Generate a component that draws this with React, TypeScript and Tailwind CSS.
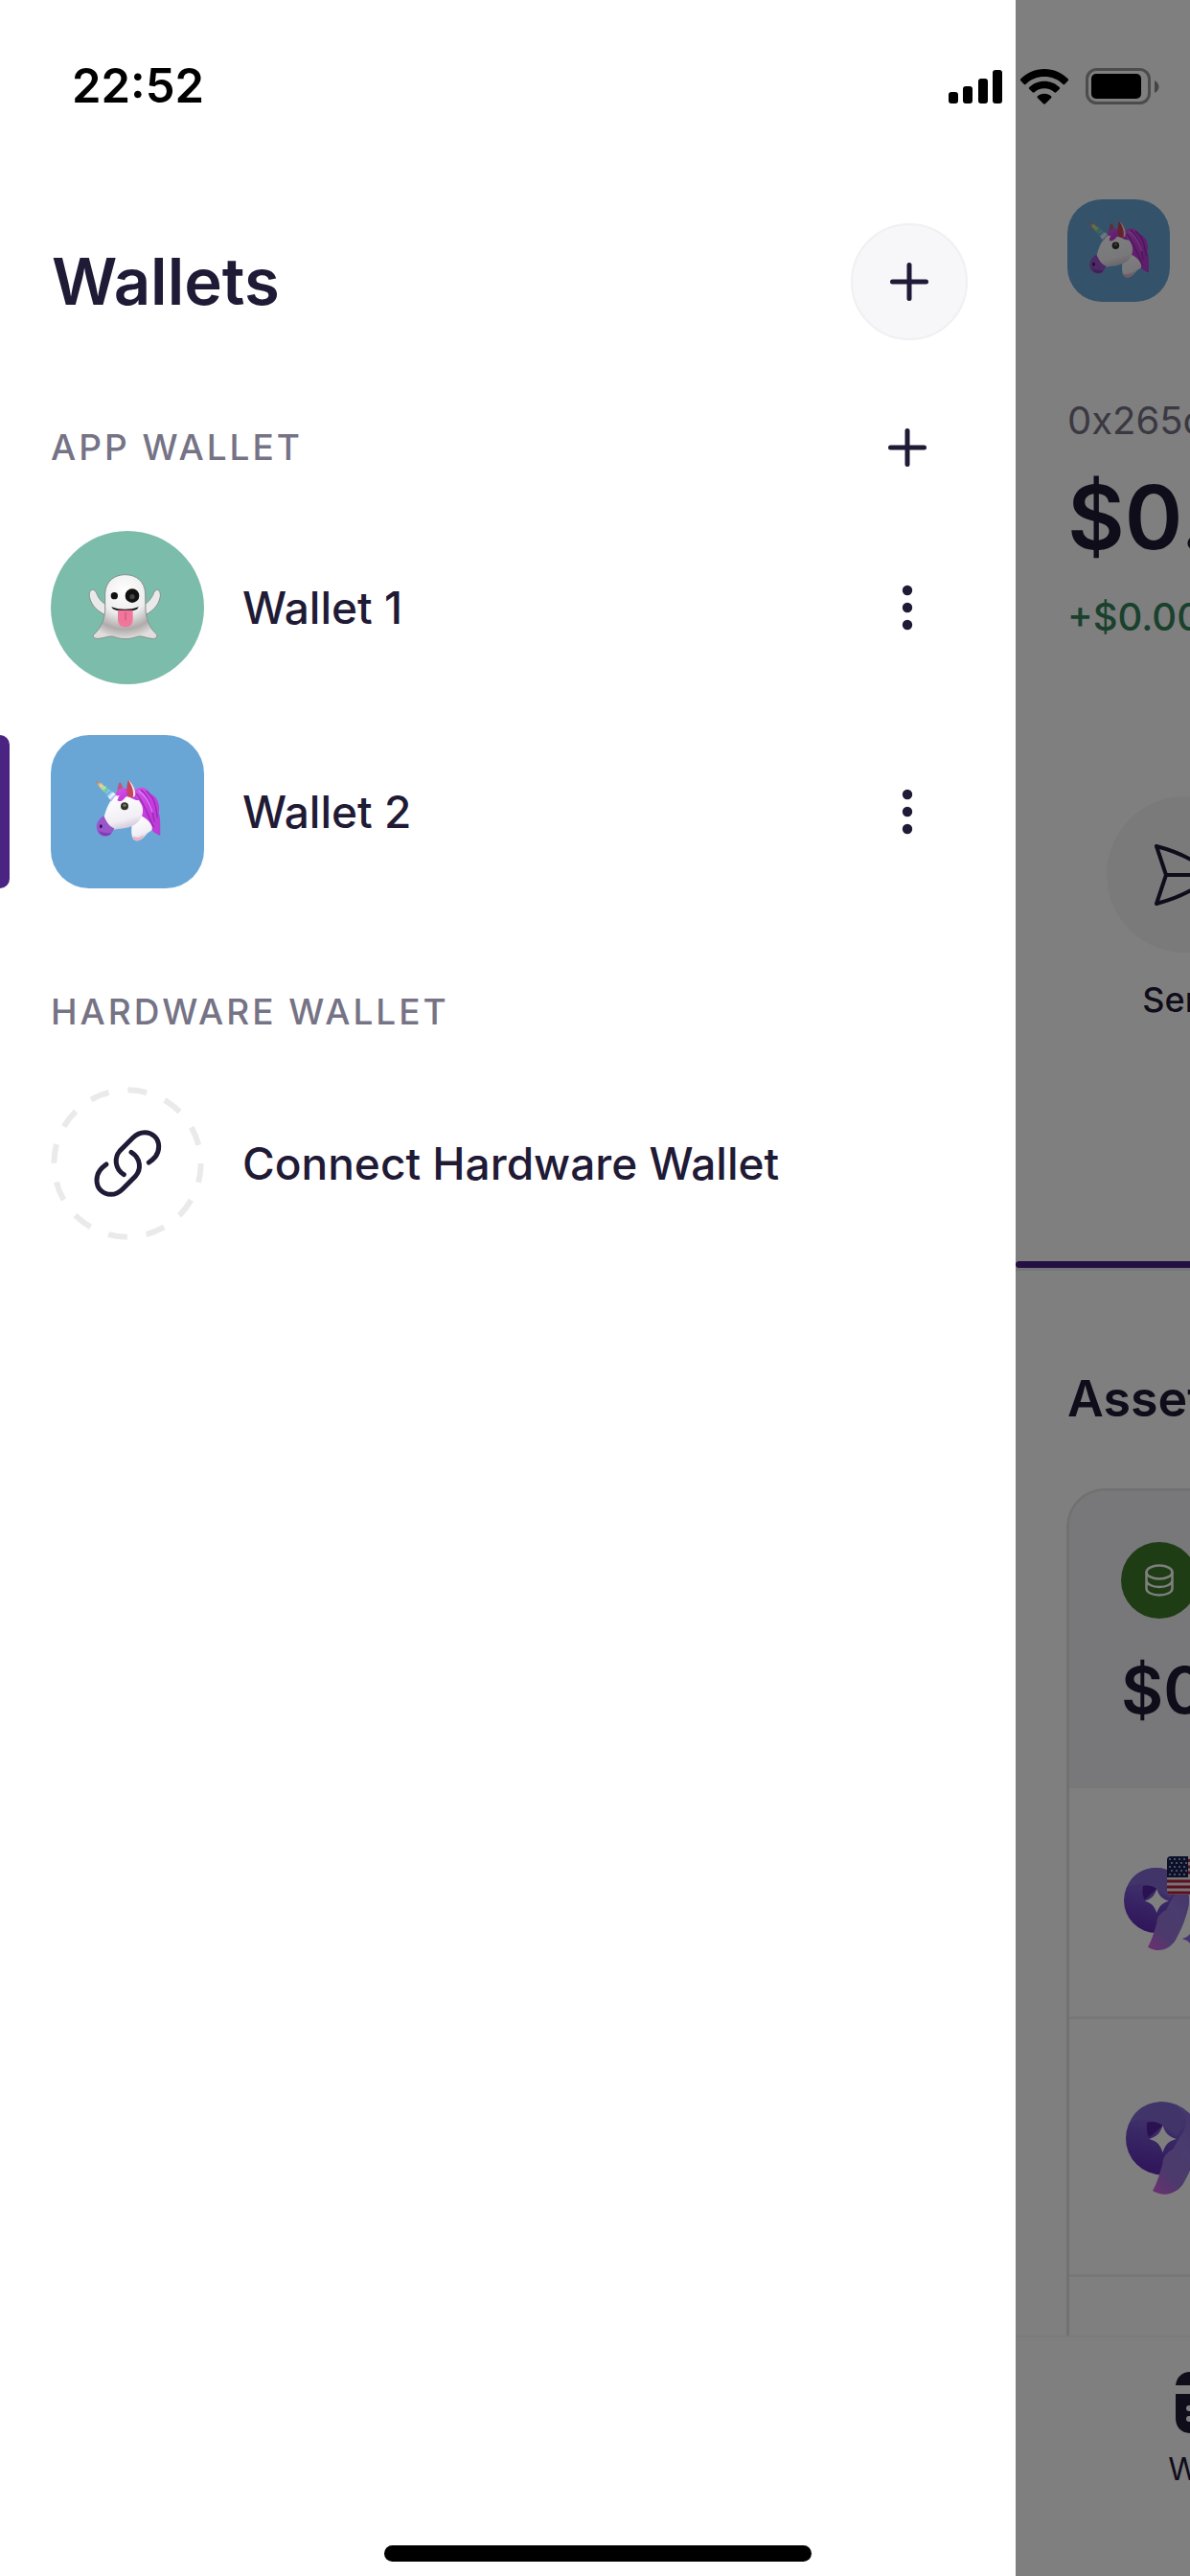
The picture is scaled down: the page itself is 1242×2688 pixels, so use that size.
import type { ReactNode } from "react";
import clsx from "clsx";

type Wallet = {
  name: string;
  avatar: "ghost" | "unicorn";
  selected: boolean;
};

const wallets: Wallet[] = [
  { name: "Wallet 1", avatar: "ghost", selected: false },
  { name: "Wallet 2", avatar: "unicorn", selected: true },
];

function PlusIcon() {
  return (
    <svg viewBox="0 0 40 40" className="size-10" fill="none" stroke="currentColor" strokeWidth="5" strokeLinecap="round" aria-hidden="true">
      <path d="M20 2.5v35M2.5 20h35" />
    </svg>
  );
}

function MoreIcon() {
  return (
    <svg viewBox="0 0 40 50" className="h-[50px] w-10" fill="currentColor" aria-hidden="true">
      <circle cx="20" cy="7" r="5.2" />
      <circle cx="20" cy="25" r="5.2" />
      <circle cx="20" cy="43" r="5.2" />
    </svg>
  );
}

function GhostIcon() {
  return (
    <svg viewBox="0 0 480 480" className="size-full" aria-hidden="true">
      <defs>
        <radialGradient id="ghost-body" cx="0.48" cy="0.25" r="0.75">
          <stop offset="0" stopColor="#ffffff" />
          <stop offset="0.5" stopColor="#ececec" />
          <stop offset="0.8" stopColor="#b0abab" />
          <stop offset="1" stopColor="#e0dddd" />
        </radialGradient>
      </defs>
      <g stroke="#85908d" strokeWidth="3" strokeLinejoin="round">
        <path d="M180 268C150 255 126 235 121 205C119 188 128 181 137 186C146 192 144 216 176 232Z" fill="#e9e9e9" />
        <path d="M286 268C316 255 338 235 343 205C344 188 336 181 328 186C320 192 320 216 290 232Z" fill="#e9e9e9" />
        <path
          d="M170 195C172 157 200 137 233 137C268 137 294 158 296 195L297 250C300 285 315 310 332 324C336 334 326 339 315 337C295 335 285 326 268 332C245 340 222 340 200 332C182 326 170 336 150 337C138 338 130 333 134 325C152 309 167 285 170 250Z"
          fill="url(#ghost-body)"
        />
      </g>
      <circle cx="199" cy="203" r="11" fill="#111" />
      <circle cx="255" cy="203" r="22" fill="#111" />
      <circle cx="255" cy="206" r="8" fill="#444" />
      <path d="M190 238C215 248 250 248 275 238C272 247 262 251 233 251C206 251 194 247 190 238Z" fill="#111" />
      <path d="M210 248H257V275C257 292 248 301 233 301C218 301 210 292 210 275Z" fill="#f0769b" />
      <path d="M234 254V280" stroke="#cc4d78" strokeWidth="3" />
    </svg>
  );
}

function UnicornIcon({ viewBox }: { viewBox: string }) {
  return (
    <svg viewBox={viewBox} className="size-full" aria-hidden="true">
      <defs>
        <linearGradient id="unicorn-horn" x1="0" y1="0" x2="1" y2="1">
          <stop offset="0" stopColor="#b0705c" />
          <stop offset="0.25" stopColor="#e9d68a" />
          <stop offset="0.45" stopColor="#74d49a" />
          <stop offset="0.6" stopColor="#5aa9e8" />
          <stop offset="0.75" stopColor="#f2f6ff" />
          <stop offset="1" stopColor="#3d55c9" />
        </linearGradient>
        <linearGradient id="unicorn-face" x1="0.3" y1="0" x2="0.6" y2="1">
          <stop offset="0" stopColor="#ffffff" />
          <stop offset="0.7" stopColor="#f1eff5" />
          <stop offset="1" stopColor="#cbbfd3" />
        </linearGradient>
        <linearGradient id="unicorn-mane" x1="0" y1="0" x2="1" y2="1">
          <stop offset="0" stopColor="#d05be6" />
          <stop offset="0.5" stopColor="#c83bdf" />
          <stop offset="1" stopColor="#b43fd3" />
        </linearGradient>
      </defs>
      <path d="M208 178C208 163 212 152 216 147C224 154 227 164 227 176Z" fill="#b85a83" />
      <path d="M255 178C275 157 302 162 311 184C334 190 344 222 338 243C345 262 342 292 343 312C337 318 334 308 325 306C306 290 282 262 262 232Z" fill="url(#unicorn-mane)" />
      <path d="M283 172C308 193 318 230 324 270M268 184C292 210 302 248 322 288M300 176C326 196 328 222 334 258" fill="none" stroke="#932bb4" strokeWidth="4" strokeLinecap="round" />
      <path d="M276 176C300 190 310 214 318 240" fill="none" stroke="#e779f3" strokeWidth="4" strokeLinecap="round" />
      <path d="M255 252C279 247 299 258 312 277C321 291 318 300 310 302C298 308 292 326 274 331C256 333 251 314 253 290Z" fill="url(#unicorn-face)" />
      <path d="M258 316C270 326 284 318 291 312C286 326 275 332 266 330C260 328 258 322 258 316Z" fill="#e8b4bf" />
      <path d="M206 188C236 176 274 190 286 222C294 248 280 274 255 284C234 295 205 292 184 299C162 300 158 274 168 252C175 228 184 202 206 188Z" fill="url(#unicorn-face)" />
      <path d="M166 253C150 263 141 277 144 294C148 315 168 322 184 314C193 307 196 298 199 292C184 288 174 271 166 253Z" fill="#9a55cb" />
      <path d="M150 300C158 318 178 320 190 307C178 307 166 308 150 300Z" fill="#7b3eb0" />
      <ellipse cx="157" cy="286" rx="4" ry="6" fill="#33104f" />
      <path d="M140 147C145 145 151 147 156 151L205 186L190 207Z" fill="url(#unicorn-horn)" />
      <path d="M152 158L160 151M163 170L173 161M173 182L186 172M182 195L198 182" stroke="#ffffff" strokeOpacity="0.5" strokeWidth="3" />
      <path d="M205 180C218 160 240 163 248 178C262 182 268 198 278 204C256 206 248 188 234 194C226 206 214 212 208 203C214 200 208 193 218 188C204 194 200 186 205 180Z" fill="url(#unicorn-mane)" />
      <path d="M243 140C258 154 267 172 264 190C258 198 246 198 240 190C236 172 238 154 243 140Z" fill="#c6445c" />
      <path d="M243 140C258 154 267 172 264 190L257 196C262 174 252 156 243 140Z" fill="#f5e6ec" />
      <circle cx="231" cy="223" r="12" fill="#2f3328" />
      <circle cx="231" cy="220" r="5" fill="#6d7b58" />
    </svg>
  );
}

function ConnectIcon() {
  return (
    <svg viewBox="39 41 480 480" className="size-40 shrink-0" fill="none" aria-hidden="true">
      <circle cx="279" cy="281" r="230" pathLength="360" stroke="#eaeaea" strokeWidth="18" strokeDasharray="15 15" />
      <g stroke="#1f1a35" strokeWidth="15" strokeLinecap="round">
        <path d="M213 284C200 294 183 306 183 334C183 360 203 378 227 378C243 378 254 371 264 361L305 320C322 300 322 265 291 246" />
        <path d="M346 278C360 268 377 256 377 228C377 202 357 184 333 184C317 184 306 191 296 201L255 242C238 262 238 297 268 316" />
      </g>
    </svg>
  );
}

function TokenLogo({ className }: { className: string }) {
  return (
    <svg viewBox="38 90 246 264" className={className} aria-hidden="true">
      <defs>
        <linearGradient id="token-head" x1="0.6" y1="0" x2="0.4" y2="1">
          <stop offset="0" stopColor="#9078dc" />
          <stop offset="0.5" stopColor="#7350cc" />
          <stop offset="1" stopColor="#5f28b4" />
        </linearGradient>
        <linearGradient id="token-tail" x1="0.8" y1="0" x2="0.15" y2="1">
          <stop offset="0" stopColor="#8a6cd8" />
          <stop offset="0.4" stopColor="#9478dc" />
          <stop offset="0.75" stopColor="#9a74d8" />
          <stop offset="1" stopColor="#cf62e0" />
        </linearGradient>
      </defs>
      <circle cx="140" cy="192" r="102" fill="url(#token-head)" />
      <path d="M50 148C62 112 98 90 140 90C178 90 202 112 205 150L180 186L141 157C112 136 76 138 50 148Z" fill="#8068d0" />
      <path d="M205 114C230 132 242 160 242 192C240 226 226 268 202 312C188 340 150 362 113 338C126 316 132 292 141 262C142 242 152 232 170 222L190 186C205 170 212 140 205 114Z" fill="url(#token-tail)" />
      <path d="M98 147C116 143 132 148 141 157L103 190C96 178 95 162 98 147Z" fill="#5223a4" />
      <path d="M141 156C148 178 157 187 179 194C157 200 148 210 141 232C134 210 125 200 103 194C125 187 134 178 141 156Z" fill="#fff" />
      <path d="M252 280C257 300 264 306 284 312C264 318 257 324 252 344C247 324 240 318 220 312C240 306 247 300 252 280Z" fill="#8b6be0" />
    </svg>
  );
}

function FlagIcon() {
  return (
    <svg viewBox="0 0 72 40" className="absolute top-0 left-[45px] h-10 w-[72px] rounded-sm" aria-hidden="true">
      <rect width="72" height="40" fill="#f4e6ea" />
      <path d="M0 4.500H72M0 11H72M0 17H72M0 26H72M0 32H72M0 38H72" stroke="#b3203f" strokeWidth="3" />
      <rect width="22" height="22" fill="#1d2150" />
      <path d="M2 3H22M4 7H22M2 11H22M4 15H22M2 19H22" stroke="#8fa0d8" strokeWidth="2" strokeDasharray="2 3" />
    </svg>
  );
}

function StatusBar() {
  return (
    <header className="pointer-events-none absolute inset-x-0 top-0 flex h-[180px] items-center justify-between pr-8 pl-[75px] text-black">
      <time className="text-[49px] leading-[60px] font-semibold">22:52</time>
      <div className="flex items-center">
        <svg viewBox="0 0 57 37" className="h-[37px] w-[57px]" aria-label="Signal">
          <rect x="0" y="24" width="10" height="12" rx="3" />
          <rect x="15" y="18" width="10" height="18" rx="3" />
          <rect x="31" y="10" width="10" height="26" rx="3" />
          <rect x="46" y="1" width="10" height="35" rx="3" />
        </svg>
        <svg viewBox="0 0 150 111" className="ml-[18px] h-[37px] w-[50px]" aria-label="Wi-Fi">
          <path d="M75 0C104 0 130 12 149 31C151 33 151 35 149 37L139 47C137 49 135 49 133 47C117 32 97 24 75 24S33 32 17 47C15 49 13 49 11 47L1 37C-1 35 -1 33 1 31C20 12 46 0 75 0Z" />
          <path d="M75 38C94 38 110 45 122 57C124 59 124 61 122 63L112 73C110 75 108 75 106 73C98 65 87 61 75 61S52 65 44 73C42 75 40 75 38 73L28 63C26 61 26 59 28 57C40 45 56 38 75 38Z" />
          <path d="M75 77C84 77 91 80 96 85C98 87 98 89 96 91L78 109C76 111 74 111 72 109L54 91C52 89 52 87 54 85C59 80 66 77 75 77Z" />
        </svg>
        <svg viewBox="0 0 77 38" className="ml-[18px] h-[38px] w-[77px]" aria-label="Battery">
          <rect x="1.500" y="1.500" width="65" height="35" rx="10" fill="none" stroke="#000" strokeOpacity="0.4" strokeWidth="3" />
          <rect x="6" y="6" width="52" height="26" rx="5" />
          <path d="M72 13C78 16 78 23 72 26Z" opacity="0.45" />
        </svg>
      </div>
    </header>
  );
}

function SectionTitle({ children, action }: { children: ReactNode; action?: ReactNode }) {
  return (
    <div className="flex h-12 items-center justify-between pr-[93px] pl-[53px]">
      <h2 className="text-[37px] leading-[48px] font-medium tracking-[3px] text-[#757385] uppercase">{children}</h2>
      {action}
    </div>
  );
}

function WalletRow({ wallet }: { wallet: Wallet }) {
  return (
    <li className="flex h-40 items-center pr-[93px]">
      <span className={clsx("h-full w-[10px] rounded-r-[10px]", wallet.selected && "bg-[#4b2382]")} />
      <button type="button" className="ml-[43px] flex flex-1 items-center gap-10 text-left">
        <span className={clsx("size-40 shrink-0", wallet.avatar === "ghost" ? "rounded-full bg-[#7cbcaa]" : "rounded-[40px] bg-[#69a6d6]")}>
          {wallet.avatar === "ghost" ? <GhostIcon /> : <UnicornIcon viewBox="0 0 480 480" />}
        </span>
        <span className="text-[46px] leading-[56px] font-medium">{wallet.name}</span>
      </button>
      <button type="button" aria-label={`${wallet.name} options`}>
        <MoreIcon />
      </button>
    </li>
  );
}

function WalletDrawer() {
  return (
    <aside className="min-w-0 flex-1 bg-white pt-[233px]">
      <div className="flex items-center justify-between pr-[50px] pl-[54px]">
        <h1 className="text-[67px] leading-[80px] font-semibold">Wallets</h1>
        <button type="button" aria-label="Add wallet" className="flex size-[122px] items-center justify-center rounded-full border-2 border-[#f0f0f3] bg-[#f7f7fa]">
          <PlusIcon />
        </button>
      </div>

      <section className="mt-[88px]">
        <SectionTitle
          action={
            <button type="button" aria-label="Add app wallet">
              <PlusIcon />
            </button>
          }
        >
          App wallet
        </SectionTitle>
        <ul className="mt-[63px] flex flex-col gap-[53px]">
          {wallets.map((wallet) => (
            <WalletRow key={wallet.name} wallet={wallet} />
          ))}
        </ul>
      </section>

      <section className="mt-[105px]">
        <SectionTitle>Hardware wallet</SectionTitle>
        <button type="button" className="mt-[54px] flex items-center gap-10 pl-[53px] text-left">
          <ConnectIcon />
          <span className="text-[46px] leading-[56px] font-medium">Connect Hardware Wallet</span>
        </button>
      </section>
    </aside>
  );
}

function HomeScreen() {
  return (
    <main className="relative flex w-[182px] shrink-0 flex-col overflow-hidden bg-white whitespace-nowrap">
      <div className="flex w-[1242px] flex-1 flex-col pt-[208px]">
        <div className="px-[54px]">
          <div className="size-[107px] rounded-[36px] bg-[#69a6d6]">
            <UnicornIcon viewBox="68 67 346 346" />
          </div>
          <p className="mt-[100px] text-[40px] leading-[48px] text-[#757385]">0x265d</p>
          <p className="mt-[27px] text-[92px] leading-[100px] font-semibold">$0.00</p>
          <p className="mt-[30px] text-[40px] leading-[48px] font-medium text-[#34835a]">+$0.00</p>
        </div>

        <button type="button" className="mt-[163px] ml-[95px] flex w-[163px] flex-col items-center gap-[25px]">
          <span className="flex size-[163px] items-center justify-center rounded-full bg-[#f4f4f5]">
            <svg viewBox="0 0 64 64" className="size-16" fill="none" stroke="currentColor" strokeWidth="4" strokeLinecap="round" strokeLinejoin="round" aria-hidden="true">
              <path d="M2 2C25 8 45 18 61 32C45 46 25 56 2 62L12 32ZM12 32H61" />
            </svg>
          </span>
          <span className="text-[36px] leading-[48px] font-medium">Send</span>
        </button>

        <div className="mt-[249px] border-b-[3px] border-[#ecebf6]">
          <div className="h-[7px] rounded-full bg-[#4b2382]" />
        </div>

        <h2 className="mt-[104px] px-[54px] text-[52px] leading-[60px] font-semibold">Assets</h2>

        <section className="mx-[53px] mt-[63px] flex flex-1 flex-col overflow-hidden rounded-t-[40px] border-x-[3px] border-t-[3px] border-[#e2e2e5]">
          <div className="bg-[#f0eff5] px-[54px] pt-[53px] pb-[63px]">
            <div className="flex size-20 items-center justify-center rounded-full bg-[#3e7a28]">
              <svg viewBox="0 0 30 34" className="h-[34px] w-[30px]" fill="none" stroke="#fff" strokeWidth="2.500" aria-hidden="true">
                <ellipse cx="15" cy="8.500" rx="13.500" ry="7" />
                <path d="M1.500 8.500V25.500C1.500 29.500 7.500 32.500 15 32.500S28.500 29.500 28.500 25.500V8.500M1.500 17C1.500 21 7.500 24 15 24S28.500 21 28.500 17" />
              </svg>
            </div>
            <p className="mt-[34px] text-[68px] leading-[80px] font-semibold">$0.00</p>
          </div>
          <div className="flex h-[241px] items-center border-b-[3px] border-[#eeeef0] pt-1 pl-[57px]">
            <div className="relative pt-3">
              <TokenLogo className="h-[88px] w-[82px]" />
              <FlagIcon />
            </div>
          </div>
          <div className="flex h-[269px] items-center border-b-[3px] border-[#eeeef0] pt-1 pl-[59px]">
            <TokenLogo className="h-[99px] w-[92px]" />
          </div>
        </section>
      </div>

      <nav className="flex h-[251px] w-[1242px] border-t-2 border-[#f6f6f6] pt-9">
        <button type="button" className="flex w-[414px] flex-col items-center gap-[17px]">
          <svg viewBox="0 0 80 64" className="h-16 w-20" fill="currentColor" aria-hidden="true">
            <path d="M0 14C1 5 7 0 16 0H64C73 0 79 5 80 14Z" />
            <path d="M0 23H80V48C80 58 74 64 64 64H16C6 64 0 58 0 48Z" />
            <circle cx="14" cy="38" r="3" fill="#fff" />
            <circle cx="14" cy="49" r="3" fill="#fff" />
          </svg>
          <span className="text-[33px] leading-[40px]">Wallet</span>
        </button>
      </nav>

      <div className="absolute inset-0 bg-black/50" />
    </main>
  );
}

export default function App() {
  return (
    <div className="relative flex min-h-screen overflow-hidden bg-white font-['Inter',sans-serif] text-[#1f1a35]">
      <WalletDrawer />
      <HomeScreen />
      <StatusBar />
      <div className="pointer-events-none absolute inset-x-0 bottom-[15px] flex justify-center pl-1.5">
        <div className="h-[17px] w-[446px] rounded-full bg-black" />
      </div>
    </div>
  );
}
